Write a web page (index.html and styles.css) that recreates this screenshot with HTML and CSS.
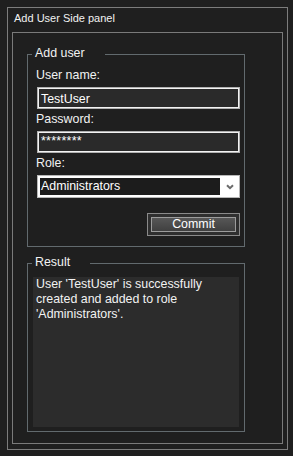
FILE: index.html
```html
<!DOCTYPE html>
<html lang="en">
<head>
<meta charset="utf-8">
<title>Add User Side panel</title>
<link rel="stylesheet" href="styles.css">
</head>
<body>
<div class="outer">
  <div class="title">Add User Side panel</div>
  <div class="panel">
    <fieldset class="group group-add">
      <legend>Add user</legend>
      <div class="group-body">
        <label class="lbl">User name:</label>
        <div class="input">TestUser</div>
        <label class="lbl">Password:</label>
        <div class="input input-pass">********</div>
        <label class="lbl">Role:</label>
        <div class="select">
          <span class="select-value">Administrators</span>
          <span class="select-arrow">
            <svg width="8" height="6" viewBox="0 0 8 6"><path d="M1 1.2 L4 4.2 L7 1.2" fill="none" stroke="#6b6b6b" stroke-width="2"/></svg>
          </span>
        </div>
        <div class="actions">
          <button class="btn"><span class="btn-inner">Commit</span></button>
        </div>
      </div>
    </fieldset>
    <fieldset class="group group-result">
      <legend>Result</legend>
      <div class="result-body">
        <div class="result-text">User 'TestUser' is successfully created and added to role 'Administrators'.</div>
      </div>
    </fieldset>
  </div>
</div>
</body>
</html>
```

FILE: styles.css
```css
html, body {
  margin: 0;
  padding: 0;
  background: #1f1f1f;
}
body {
  padding: 7px 0 0 7px;
  font-family: "Liberation Sans", Arial, sans-serif;
  font-size: 12.4px;
  color: #f2f2f2;
}
.outer {
  box-sizing: border-box;
  width: 281px;
  border: 1px solid #7c7c7c;
  padding: 0 4px 5px 4px;
}
.title {
  font-size: 11px;
  line-height: 13px;
  height: 13px;
  padding: 4px 0 0 2px;
  margin-bottom: 7px;
}
.panel {
  border: 1px solid #7a7a7a;
  padding: 0 0 11px 0;
}
.group {
  box-sizing: border-box;
  width: 218px;
  margin: 0 0 0 14px;
  padding: 0;
  border: 1px solid #626a6e;
  min-inline-size: 0;
}
.group-add { margin-top: 14px; }
.group-result { margin-top: 9px; }
.group legend {
  margin-left: 4px;
  padding: 0 20px 2px 3px;
  line-height: 13px;
  font-size: 12.4px;
}
.group-body {
  padding: 6px 4px 10px 8px;
}
.lbl {
  display: block;
  line-height: 15px;
  height: 15px;
}
.lbl + .input, .lbl + .select { margin-top: 4px; }
.input + .lbl, .select + .lbl { margin-top: 3px; }
.input {
  box-sizing: border-box;
  margin-left: 1px;
  width: 203px;
  height: 22px;
  border: 1px solid #b0b0b0;
  box-shadow: inset 0 0 0 1px #f2f2f2;
  background: #2a2a2a;
  padding: 2px 0 0 3px;
  line-height: 18px;
  color: #ffffff;
}
.input-pass {
  letter-spacing: 0.3px;
  line-height: 15px;
}
.select {
  box-sizing: border-box;
  margin-left: 1px;
  width: 203px;
  height: 23px;
  border: 1px solid #b8b8b8;
  background: #ffffff;
  padding: 2px;
  display: flex;
}
.select-value {
  flex: 1;
  background: #1c1c1c;
  color: #ffffff;
  line-height: 17px;
  padding-left: 1px;
}
.select-arrow {
  width: 17px;
  display: flex;
  align-items: center;
  justify-content: center;
  padding-left: 3px;
  box-sizing: border-box;
}
.select-arrow svg { display: block; }
.actions {
  display: flex;
  justify-content: flex-end;
  margin-top: 15px;
}
.btn {
  box-sizing: border-box;
  width: 93px;
  height: 23px;
  margin: 0;
  padding: 3px;
  border: 1px solid #8a8a8a;
  background: #2f2f2f;
  font: inherit;
  color: #ffffff;
  display: block;
}
.btn-inner {
  display: block;
  height: 13px;
  border: 1px solid #9c9c9c;
  background: linear-gradient(#575757, #404040);
  line-height: 13px;
  text-align: center;
  font-size: 12.4px;
}
.result-body {
  padding: 6px 4px 4px 5px;
}
.result-text {
  box-sizing: border-box;
  width: 206px;
  height: 150px;
  background: #2c2c2c;
  padding: 0 4px 0 3px;
  line-height: 15px;
  color: #f2f2f2;
}
```
